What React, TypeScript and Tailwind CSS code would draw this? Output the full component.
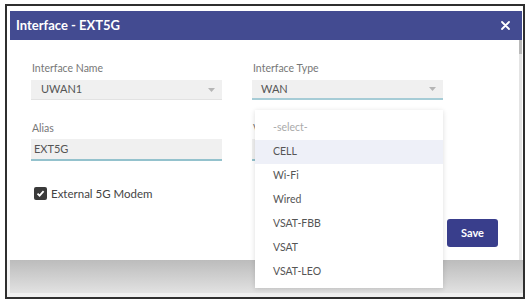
import React from "react";

const Chevron = () => (
  <svg width="7" height="4" viewBox="0 0 7 4" className="shrink-0">
    <path d="M0 0 L7 0 L3.5 4 Z" fill="#b5b5b5" />
  </svg>
);

export default function App() {
  const items = ["CELL", "Wi-Fi", "Wired", "VSAT-FBB", "VSAT", "VSAT-LEO"];
  return (
    <div
      className="w-[530px] h-[300px] bg-white pt-[4px] pl-[5px] overflow-hidden"
      style={{ fontFamily: "Lato, 'Open Sans', sans-serif" }}
    >
      <div className="w-[520px] h-[295px] border-2 border-[#2f2f2f] flex flex-col bg-white">
        <div className="flex pl-[3px] pt-[5px]">
          <div className="relative w-[509px] h-[249px] flex flex-col bg-white">
            <div className="h-[29px] bg-[#434b91] flex items-center justify-between pl-[6px] pr-[9px]">
              <span className="text-white text-[13px] font-bold">Interface - EXT5G</span>
              <svg width="9" height="9" viewBox="0 0 9 9">
                <path d="M1 1 L8 8 M8 1 L1 8" stroke="#fff" strokeWidth="1.8" strokeLinecap="round" />
              </svg>
            </div>
            <div className="flex-1 flex flex-col pl-[21px] pr-[21px] pt-[22px]">
              <div className="grid grid-cols-[191px_191px] gap-x-[30px]">
                <div className="flex flex-col">
                  <span className="text-[10.5px] leading-[12px] text-[#777] pl-[1px]">Interface Name</span>
                  <div className="mt-[6px] h-[20px] bg-[#f0f0f0] border-b border-[#e2e2e2] flex items-center justify-between pl-[10px] pr-[7px]">
                    <span className="text-[11px] text-[#555]">UWAN1</span>
                    <Chevron />
                  </div>
                </div>
                <div className="flex flex-col">
                  <span className="text-[10.5px] leading-[12px] text-[#777] pl-[1px]">Interface Type</span>
                  <div className="mt-[6px] h-[20px] bg-[#f0f0f0] border-b-2 border-[#a6ccd6] flex items-center justify-between pl-[9px] pr-[7px]">
                    <span className="text-[11px] text-[#555]">WAN</span>
                    <Chevron />
                  </div>
                </div>
                <div className="flex flex-col mt-[22px]">
                  <span className="text-[10.5px] leading-[12px] text-[#777] pl-[1px]">Alias</span>
                  <div className="mt-[5px] h-[22px] bg-[#f0f0f0] border-b-2 border-[#94c2cd] flex items-center pl-[3px]">
                    <span className="text-[11px] text-[#555]">EXT5G</span>
                  </div>
                </div>
                <div className="flex flex-col mt-[22px]">
                  <span className="text-[10.5px] leading-[12px] text-[#777] pl-[1px]">VLAN ID</span>
                  <div className="mt-[5px] h-[22px] bg-[#f0f0f0] border-b-2 border-[#94c2cd]" />
                </div>
              </div>
              <div className="mt-[24px] flex items-center gap-[4px] pl-[3px]">
                <div className="w-[13px] h-[13px] rounded-[2px] bg-[#3a3a3a] flex items-center justify-center">
                  <svg width="9" height="9" viewBox="0 0 9 9">
                    <path d="M1.5 4.6 L3.6 6.7 L7.6 2.2" stroke="#fff" strokeWidth="1.8" fill="none" />
                  </svg>
                </div>
                <span className="text-[11.5px] text-[#444]">External 5G Modem</span>
              </div>
              <div className="mt-[17px] flex justify-end">
                <div className="w-[51px] h-[28px] rounded-[3px] bg-[#393e8c] flex items-center justify-center text-white text-[11px] font-bold">
                  Save
                </div>
              </div>
            </div>
            <div className="absolute z-10 left-[245px] top-[99px] w-[188px] h-[178px] bg-white shadow-[0_1px_5px_rgba(0,0,0,0.14)] pt-[6px] flex flex-col">
              <div className="h-[24px] flex items-center pl-[18px] text-[10.5px] text-[#aaa]">-select-</div>
              {items.map((it, i) => (
                <div
                  key={it}
                  className={
                    i === 0
                      ? "h-[24px] flex items-center pl-[18px] text-[10.5px] text-[#555] bg-[#eef0f8]"
                      : "h-[24px] flex items-center pl-[18px] text-[10.5px] text-[#555]"
                  }
                >
                  {it}
                </div>
              ))}
            </div>
          </div>
          <div className="w-[3px] bg-[#e4e4e4] flex flex-col">
            <div className="h-[29px] bg-[#434b91]" />
            <div className="h-[14px] bg-[#b9b9b9]" />
          </div>
        </div>
        <div className="flex-1 pl-[3px] flex flex-col bg-[#f4f4f4]">
          <div className="flex-1 bg-gradient-to-b from-[#bcbcbc] to-[#e2e2e2]" />
          <div className="h-[4px] bg-[#efefef]" />
        </div>
      </div>
    </div>
  );
}
